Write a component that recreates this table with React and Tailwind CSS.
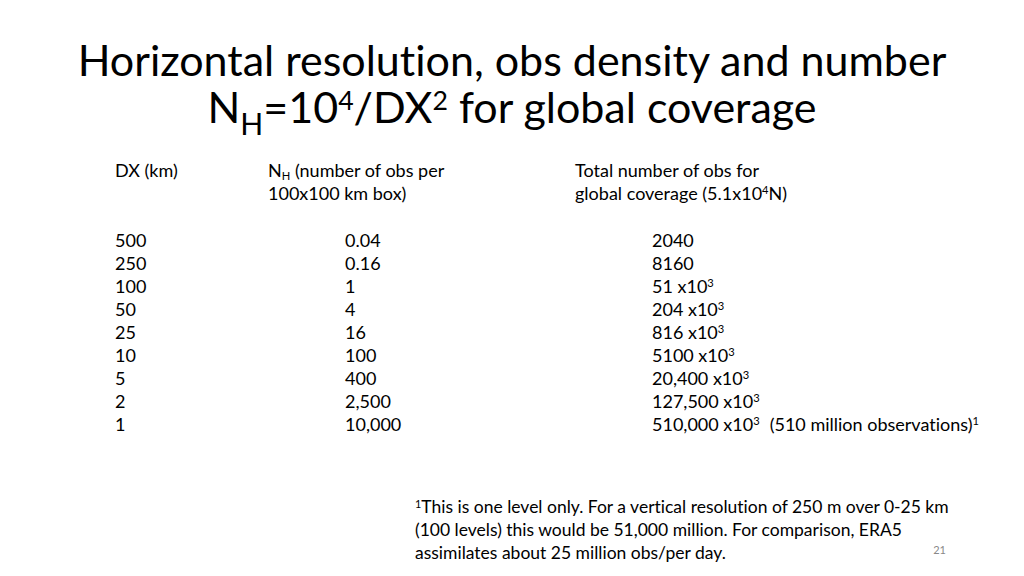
const rows = [
  ["500", "0.04", "2040", false],
  ["250", "0.16", "8160", false],
  ["100", "1", "51 x10", true],
  ["50", "4", "204 x10", true],
  ["25", "16", "816 x10", true],
  ["10", "100", "5100 x10", true],
  ["5", "400", "20,400 x10", true],
  ["2", "2,500", "127,500 x10", true],
  ["1", "10,000", "510,000 x10", true],
];

function Sup({ children }) {
  return <sup className="text-[0.62em]">{children}</sup>;
}

export default function App() {
  return (
    <div
      className="w-[1024px] h-[576px] bg-white text-black flex flex-col overflow-hidden [font-variant-ligatures:none]"
      style={{ fontFamily: "Lato, 'Open Sans', sans-serif" }}
    >
      <h1 className="pt-[36px] text-center text-[43px] leading-[47px] font-normal">
        <div>Horizontal resolution, obs density and number</div>
        <div>
          N<sub className="text-[0.7em] -bottom-[0.4em]">H</sub>=10<Sup>4</Sup>/DX<Sup>2</Sup> for global coverage
        </div>
      </h1>

      <div className="mt-[29px] pl-[115px] text-[18px] leading-[23px] grid grid-cols-[153px_307px_1fr]">
        <div>DX (km)</div>
        <div>
          N<sub className="text-[0.62em]">H</sub> (number of obs per
          <br />
          100x100 km box)
        </div>
        <div>
          Total number of obs for
          <br />
          global coverage (5.1x10<Sup>4</Sup>N)
        </div>

        <div className="col-span-3 h-[24px]" />

        {rows.map(([dx, nh, total, exp]) => (
          <div key={dx} className="contents">
            <div>{dx}</div>
            <div className="pl-[77px]">{nh}</div>
            <div className="pl-[77px] whitespace-nowrap">
              {total}
              {exp && <Sup>3</Sup>}
              {dx === "1" && (
                <>
                  <span className="ml-[10px]">(510 million observations)</span>
                  <Sup>1</Sup>
                </>
              )}
            </div>
          </div>
        ))}
      </div>

      <div className="mt-[59px] flex items-end">
        <div className="ml-[415px] w-[500px] shrink-0 text-[17.5px] leading-[23px] whitespace-nowrap">
          <Sup>1</Sup>This is one level only. For a vertical resolution of 250 m over 0-25 km
          <br />
          (100 levels) this would be 51,000 million. For comparison, ERA5
          <br />
          assimilates about 25 million obs/per day.
        </div>
        <div className="ml-auto mr-[78px] mb-[6px] text-[11px] text-[#898989]">21</div>
      </div>
    </div>
  );
}
